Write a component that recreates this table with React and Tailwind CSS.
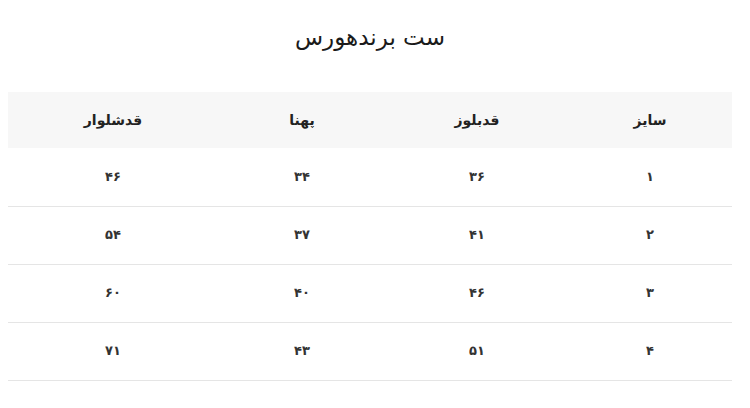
import React from 'react';

const headers = ['سایز', 'قدبلوز', 'پهنا', 'قدشلوار'];
const rows = [
  ['۱', '۳۶', '۳۴', '۴۶'],
  ['۲', '۴۱', '۳۷', '۵۴'],
  ['۳', '۴۶', '۴۰', '۶۰'],
  ['۴', '۵۱', '۴۳', '۷۱'],
];
const widths = ['w-[164px]', 'w-[182px]', 'w-[168px]', 'w-[210px]'];

const App = () => {
  return (
    <div dir="rtl" className="bg-white min-h-[408px] pr-[18px] pl-2 text-[#333] font-['DejaVu_Sans',sans-serif]">
      <h2 className="pt-[17px] h-[92px] text-center text-[23px] leading-[40px] text-[#1a1a1a]">ست برندهورس</h2>
      <table className="w-[724px] border-collapse table-fixed">
        <colgroup>
          {widths.map((w, i) => <col key={i} className={w} />)}
        </colgroup>
        <thead>
          <tr className="bg-[#f7f7f7]">
            {headers.map(h => (
              <th key={h} className="h-[56px] text-center text-[14px] font-semibold text-[#222]">{h}</th>
            ))}
          </tr>
        </thead>
        <tbody>
          {rows.map((r, i) => (
            <tr key={i} className="border-b border-[#e5e5e5]">
              {r.map((c, j) => (
                <td key={j} className="h-[58px] text-center text-[13px] font-semibold text-[#333]">{c}</td>
              ))}
            </tr>
          ))}
        </tbody>
      </table>
    </div>
  );
};

export default App;
